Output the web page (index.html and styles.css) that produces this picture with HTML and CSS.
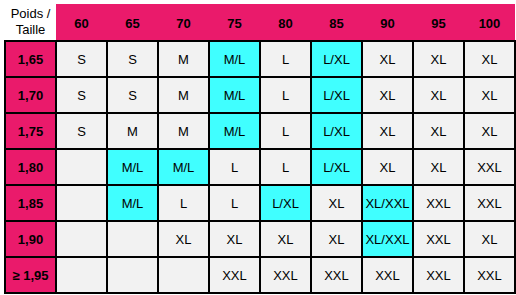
FILE: index.html
```html
<!DOCTYPE html>
<html>
<head>
<meta charset="utf-8">
<link rel="stylesheet" href="styles.css">
</head>
<body>
<table class="sizes">
  <colgroup>
    <col><col><col><col><col><col><col><col><col><col>
  </colgroup>
  <thead>
    <tr>
      <th class="corner">Poids /<br>Taille</th>
      <th>60</th><th>65</th><th>70</th><th>75</th><th>80</th><th>85</th><th>90</th><th>95</th><th>100</th>
    </tr>
  </thead>
  <tbody>
    <tr><th>1,65</th><td>S</td><td>S</td><td>M</td><td class="hl">M/L</td><td>L</td><td class="hl">L/XL</td><td>XL</td><td>XL</td><td>XL</td></tr>
    <tr><th>1,70</th><td>S</td><td>S</td><td>M</td><td class="hl">M/L</td><td>L</td><td class="hl">L/XL</td><td>XL</td><td>XL</td><td>XL</td></tr>
    <tr><th>1,75</th><td>S</td><td>M</td><td>M</td><td class="hl">M/L</td><td>L</td><td class="hl">L/XL</td><td>XL</td><td>XL</td><td>XL</td></tr>
    <tr><th>1,80</th><td></td><td class="hl">M/L</td><td class="hl">M/L</td><td>L</td><td>L</td><td class="hl">L/XL</td><td>XL</td><td>XL</td><td>XXL</td></tr>
    <tr><th>1,85</th><td></td><td class="hl">M/L</td><td>L</td><td>L</td><td class="hl">L/XL</td><td>XL</td><td class="hl">XL/XXL</td><td>XXL</td><td>XXL</td></tr>
    <tr><th>1,90</th><td></td><td></td><td>XL</td><td>XL</td><td>XL</td><td>XL</td><td class="hl">XL/XXL</td><td>XXL</td><td>XL</td></tr>
    <tr><th>&ge; 1,95</th><td></td><td></td><td></td><td>XXL</td><td>XXL</td><td>XXL</td><td>XXL</td><td>XXL</td><td>XXL</td></tr>
  </tbody>
</table>
</body>
</html>
```
FILE: styles.css
```css
html, body {
  margin: 0;
  padding: 0;
  background: #ffffff;
}
body {
  padding: 4px 0 0 4px;
  font-family: "Liberation Sans", Arial, sans-serif;
}
.sizes {
  border-collapse: collapse;
  table-layout: fixed;
  width: 511px;
}
.sizes col {
  width: 51px;
}
.sizes thead th {
  height: 37px;
  padding: 0;
  background: #ea1a6b;
  color: #000;
  font-size: 13px;
  font-weight: bold;
  text-align: center;
  vertical-align: middle;
  border: none;
  padding-top: 3px;
  box-sizing: border-box;
}
.sizes thead th.corner {
  background: #ffffff;
  font-weight: normal;
  font-size: 13px;
  line-height: 16px;
  padding-top: 0;
}
.sizes tbody th,
.sizes tbody td {
  height: 34px;
  padding: 0;
  border: 2px solid #000;
  text-align: center;
  vertical-align: middle;
  font-size: 13px;
  color: #000;
}
.sizes tbody th {
  background: #ea1a6b;
  font-weight: bold;
}
.sizes tbody td {
  background: #f2f2f2;
  font-weight: normal;
}
.sizes tbody td.hl {
  background: #40ffff;
}
```
